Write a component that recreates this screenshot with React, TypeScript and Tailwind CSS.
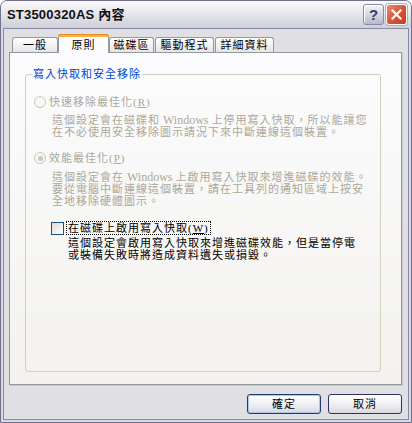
import React from 'react';

const font = "font-['Liberation_Serif','Noto_Sans_CJK_TC',serif]";
const txt = 'text-[11px] leading-[12px] tracking-[1px]';

const Win = () => <span className="text-[12px] tracking-normal"> Windows </span>;

const Tab = ({ label, width, selected }: { label: string; width: string; selected?: boolean }) =>
    selected ? (
        <div className={`${width} h-[19px] -mb-px relative z-10 rounded-t-[3px] border-x border-[#919b9c] bg-[#fcfcfe] flex flex-col`}>
            <div className="h-[3px] rounded-t-[3px] bg-[#f6b43c] border-t border-[#e68b2c] -mx-px" />
            <div className={`flex-1 flex items-center justify-center ${txt} text-black`}>{label}</div>
        </div>
    ) : (
        <div className={`${width} h-[15px] rounded-t-[3px] border border-b-0 border-[#919b9c] bg-gradient-to-b from-white to-[#e6e6ea] flex items-center justify-center ${txt} text-black`}>
            {label}
        </div>
    );

const Radio = ({ checked }: { checked?: boolean }) => (
    <div className="w-[12px] h-[12px] rounded-full border border-[#cac8bb] bg-[#f7f7f3] flex items-center justify-center shrink-0">
        {checked && <div className="w-[5px] h-[5px] rounded-full bg-[#cac8bb]" />}
    </div>
);

const App = () => {
    return (
        <div className={`w-[412px] h-[423px] ${font} bg-[#d9d9e3] border border-[#71708f] rounded-t-[7px] flex flex-col overflow-hidden`}>
            {/* title bar */}
            <div className="h-[27px] shrink-0 flex items-center pl-[6px] pr-[4px] bg-gradient-to-b from-[#fbfbfc] via-[#e4e4ea] to-[#cfcfda]">
                <span className="flex-1 text-[13px] font-bold text-[#111] font-['Liberation_Sans','Noto_Sans_CJK_TC',sans-serif] tracking-[0.2px]">
                    ST3500320AS 內容
                </span>
                <div className="w-[21px] h-[21px] rounded-[3px] border border-[#8a8aa6] bg-gradient-to-b from-[#f4f4f8] to-[#b9b9cc] flex items-center justify-center shadow-[inset_1px_1px_0_#fff]">
                    <span className="text-[15px] leading-[15px] font-bold text-[#3a3a60] font-['Liberation_Sans',sans-serif]">?</span>
                </div>
                <div className="ml-[2px] w-[21px] h-[21px] rounded-[3px] border border-white bg-gradient-to-br from-[#eb8c72] via-[#d8553a] to-[#c03d25] flex items-center justify-center shadow-[0_0_0_1px_#b0b0c0]">
                    <svg width="11" height="11" viewBox="0 0 11 11">
                        <path d="M1.5 1.5 L9.5 9.5 M9.5 1.5 L1.5 9.5" stroke="white" strokeWidth="2.2" strokeLinecap="square" />
                    </svg>
                </div>
            </div>

            {/* client area */}
            <div className="flex-1 mx-[2px] mb-[2px] border border-[#8b8aa5] bg-[#e0dfe3] flex flex-col pt-[5px] pl-[5px] pr-[6px]">
                <div className="h-[18px] flex items-end">
                    <div className="ml-[3px]" />
                    <Tab label="一般" width="w-[46px]" />
                    <Tab label="原則" width="w-[51px]" selected />
                    <Tab label="磁碟區" width="w-[45px]" />
                    <div className="w-px" />
                    <Tab label="驅動程式" width="w-[59px]" />
                    <div className="w-px" />
                    <Tab label="詳細資料" width="w-[59px]" />
                </div>

                <div className="h-[333px] border border-[#919b9c] bg-gradient-to-b from-[#fcfcfe] to-[#f3f2ee] shadow-[1px_1px_0_#c9c8ce] pt-[21px] pl-[15px] pr-[20px] pb-[12px]">
                    <div className="relative h-full border border-[#d0d0bf] rounded-[3px]">
                        <span className={`absolute left-[6px] -top-[7px] px-[1px] bg-[#fbfbfc] ${txt} text-[#0046d5] whitespace-nowrap`}>
                            寫入快取和安全移除
                        </span>

                        <div className={`pl-[8px] pt-[21px] ${txt} whitespace-nowrap`}>
                            <div className="flex items-center gap-[3px] text-[#aca899]">
                                <Radio />
                                <span>快速移除最佳化(<u>R</u>)</span>
                            </div>
                            <div className="mt-[6px] ml-[18px] text-[#aca899]">
                                這個設定會在磁碟和<Win />上停用寫入快取，所以能讓您<br />
                                在不必使用安全移除圖示請況下來中斷連線這個裝置。
                            </div>

                            <div className="mt-[14px] flex items-center gap-[3px] text-[#aca899]">
                                <Radio checked />
                                <span>效能最佳化(<u>P</u>)</span>
                            </div>
                            <div className="mt-[7px] ml-[18px] text-[#aca899]">
                                這個設定會在<Win />上啟用寫入快取來增進磁碟的效能。<br />
                                要從電腦中斷連線這個裝置，請在工具列的通知區域上按安<br />
                                全地移除硬體圖示。
                            </div>

                            <div className="mt-[14px] ml-[17px] flex items-center gap-[2px] text-black">
                                <div className="w-[13px] h-[13px] border border-[#1c5180] bg-gradient-to-br from-[#dcdcd7] to-white shrink-0" />
                                <span className="border border-dotted border-black px-[1px]">在磁碟上啟用寫入快取(<u>W</u>)</span>
                            </div>
                            <div className="mt-[2px] ml-[34px] text-black">
                                這個設定會啟用寫入快取來增進磁碟效能，但是當停電<br />
                                或裝備失敗時將造成資料遺失或損毀。
                            </div>
                        </div>
                    </div>
                </div>

                <div className="mt-[9px] flex justify-end gap-[7px]">
                    <button className={`w-[74px] h-[20px] rounded-[3px] border border-[#1f3c6e] bg-gradient-to-b from-white via-[#f0f0f4] to-[#d8d8e0] shadow-[inset_0_0_0_1px_#a9c6ee] ${txt} text-black`}>
                        確定
                    </button>
                    <button className={`w-[74px] h-[20px] rounded-[3px] border border-[#30345c] bg-gradient-to-b from-white via-[#f0f0f4] to-[#d8d8e0] ${txt} text-black`}>
                        取消
                    </button>
                </div>
            </div>
        </div>
    );
};

export default App;
